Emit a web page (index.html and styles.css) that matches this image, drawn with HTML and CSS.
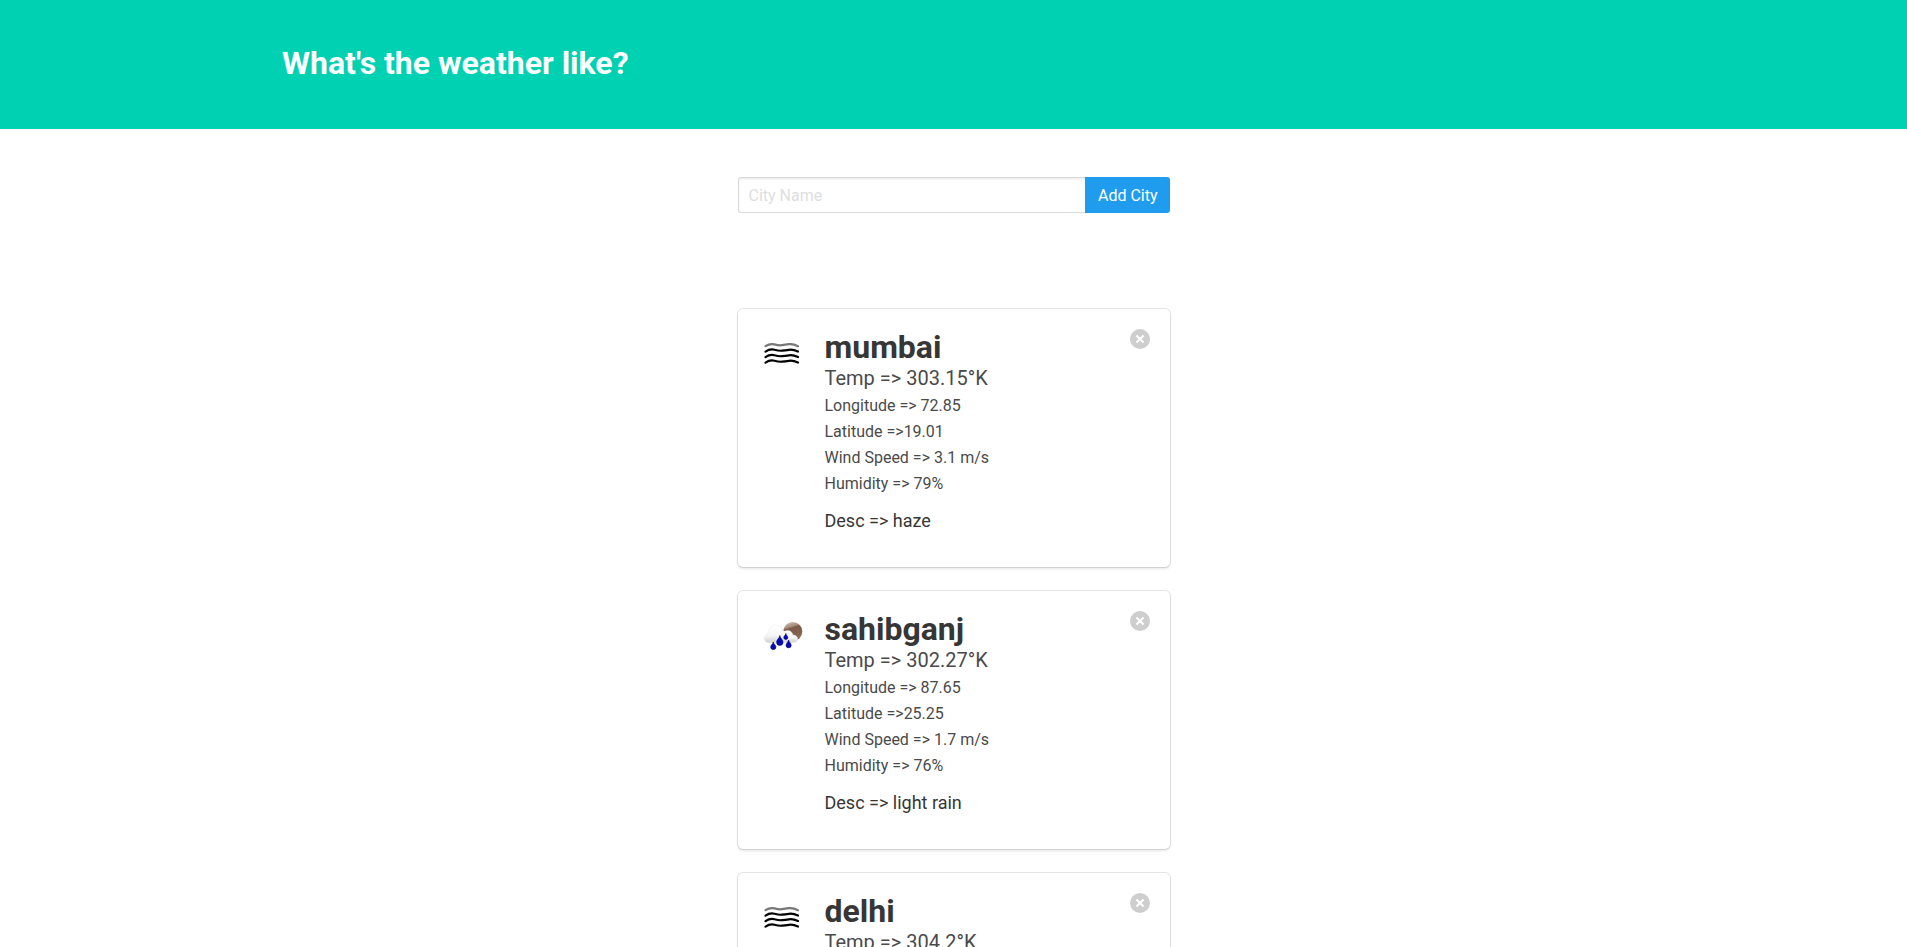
FILE: index.html
```
<!DOCTYPE html>
<html lang="en">
<head>
<meta charset="utf-8">
<meta name="viewport" content="width=device-width, initial-scale=1">
<title>What's the weather like?</title>
<link rel="stylesheet" href="styles.css">
</head>
<body>
<svg class="defs" width="0" height="0" aria-hidden="true">
  <defs>
    <linearGradient id="sun" x1="0" y1="0" x2=".3" y2="1">
      <stop offset="0" stop-color="#d8c8bc"/><stop offset=".32" stop-color="#a98f7e"/><stop offset=".42" stop-color="#7a5b47"/><stop offset="1" stop-color="#8a6a55"/>
    </linearGradient>
    <linearGradient id="cloud" x1="0" y1="0" x2="0" y2="1">
      <stop offset="0" stop-color="#ffffff"/><stop offset=".6" stop-color="#f6f6f6"/><stop offset="1" stop-color="#cfcfcf"/>
    </linearGradient>
    <symbol id="haze" viewBox="0 0 50 50">
      <g fill="none" stroke="#000" stroke-width="2.2" stroke-linecap="round">
        <path stroke="#777" d="M7.500 17.200Q12 14.200 16.500 15.400T24 16.200T31 15.200T40 17.200"/>
        <path d="M7.500 22.600Q12 19.600 16.500 20.800T24 21.700T31 20.800T40 22.600"/>
        <path d="M7.500 28.100Q12 25.100 16.500 26.300T24 27.200T31 26.300T40 28.100"/>
        <path d="M7.500 33.600Q12 30.600 16.500 31.800T24 32.700T31 31.800T40 33.600"/>
      </g>
    </symbol>
    <symbol id="rain" viewBox="0 0 50 50">
      <circle cx="34.800" cy="20.500" r="9.500" fill="url(#sun)"/>
      <path fill="url(#cloud)" stroke="#e2e2e2" stroke-width=".4" d="M24 31.500V24c1-3 3-4.500 5.500-4.500 3 0 5 2 5.500 4.500 3 0 4.700 1.700 4.700 4s-1.700 3.500-4 3.500z"/>
      <path fill="url(#cloud)" stroke="#e2e2e2" stroke-width=".4" d="M11 31.700c-3 0-4.800-2-4.800-4.600 0-2.300 1.600-4.300 4-4.700.2-4.700 3.300-8.400 7.500-8.400 3.600 0 6.200 2.200 7 5.600 2.800.5 4.800 2.900 4.800 6 0 3.600-2 6.100-5 6.100z"/>
      <g fill="#0509b8" stroke="#02046a" stroke-width=".6">
        <path d="M21.800 24.500c.5 3 3.200 4.200 3.200 6.700a3.200 3.200 0 0 1-6.400 0c0-2.500 2.700-3.700 3.200-6.700z"/>
        <path d="M27.800 22.500c.4 1.900 2 2.600 2 4a2 2 0 0 1-4 0c0-1.400 1.600-2.100 2-4z"/>
        <path d="M15.300 31c.4 2.300 2.600 3 2.600 4.900a2.600 2.600 0 0 1-5.200 0c0-1.900 2.200-2.600 2.600-4.900z"/>
        <path d="M30.600 29c.4 2.300 2.600 3.300 2.600 5.200a2.600 2.600 0 0 1-5.200 0c0-1.900 2.200-2.900 2.600-5.200z"/>
      </g>
    </symbol>
  </defs>
</svg>

<header class="hero">
  <div class="container">
    <h1 class="hero-title">What's the weather like?</h1>
  </div>
</header>

<section class="section">
  <div class="container">
    <form class="column city-form">
      <input class="input" type="text" name="name" aria-label="City Name" placeholder="City Name">
      <button class="button" type="button">Add City</button>
    </form>
  </div>
</section>

<main class="section">
  <div class="container">
    <div class="column">
      <article class="box">
        <svg class="icon" role="img" aria-label="Haze"><use href="#haze"/></svg>
        <div class="content">
          <h2 class="city">mumbai</h2>
          <p class="temp">Temp =&gt; 303.15°K</p>
          <p>Longitude =&gt; 72.85</p>
          <p>Latitude =&gt;19.01</p>
          <p>Wind Speed =&gt; 3.1 m/s</p>
          <p>Humidity =&gt; 79%</p>
          <p class="desc">Desc =&gt; haze</p>
        </div>
        <button class="delete" type="button" aria-label="Delete mumbai"></button>
      </article>
      <article class="box">
        <svg class="icon" role="img" aria-label="Light rain"><use href="#rain"/></svg>
        <div class="content">
          <h2 class="city">sahibganj</h2>
          <p class="temp">Temp =&gt; 302.27°K</p>
          <p>Longitude =&gt; 87.65</p>
          <p>Latitude =&gt;25.25</p>
          <p>Wind Speed =&gt; 1.7 m/s</p>
          <p>Humidity =&gt; 76%</p>
          <p class="desc">Desc =&gt; light rain</p>
        </div>
        <button class="delete" type="button" aria-label="Delete sahibganj"></button>
      </article>
      <article class="box">
        <svg class="icon" role="img" aria-label="Haze"><use href="#haze"/></svg>
        <div class="content">
          <h2 class="city">delhi</h2>
          <p class="temp">Temp =&gt; 304.2°K</p>
        </div>
        <button class="delete" type="button" aria-label="Delete delhi"></button>
      </article>
    </div>
  </div>
</main>
</body>
</html>
```
FILE: styles.css
```
* { box-sizing: border-box; margin: 0; padding: 0; }

html {
  overflow-x: hidden;
  scrollbar-width: none;
  background: #fff;
}

body {
  font-family: Roboto, "Open Sans", sans-serif;
  font-size: 16px;
  line-height: 26px;
  color: #4a4a4a;
}

.defs { position: absolute; }

.container {
  max-width: 1343px;
  margin: 0 auto;
}

.hero {
  padding: 45px 24px 48px;
  background: #00d1b2;
}

.hero-title {
  font-size: 32px;
  line-height: 36px;
  font-weight: 700;
  color: #fff;
}

.section { padding: 48px 24px; }

.column {
  max-width: 432px;
  margin: 0 auto;
}

.city-form { display: flex; }

.input {
  flex: 1;
  min-width: 0;
  height: 36px;
  padding: 0 10px;
  border: 1px solid #dbdbdb;
  border-right: 0;
  border-radius: 3px 0 0 3px;
  box-shadow: inset 0 1px 2px rgba(10, 10, 10, 0.1);
  font: inherit;
  color: #363636;
}

.input::placeholder { color: #dedede; }

.button {
  height: 36px;
  padding: 2px 12px 0 13px;
  border: 0;
  border-radius: 0 3px 3px 0;
  background: #209cee;
  color: #fff;
  font: inherit;
  cursor: pointer;
}

.box {
  display: flex;
  align-items: flex-start;
  min-height: 258px;
  padding: 20px;
  border-radius: 5px;
  background: #fff;
  box-shadow: 0 2px 3px rgba(10, 10, 10, 0.1), 0 0 0 1px rgba(10, 10, 10, 0.1);
}

.box + .box { margin-top: 24px; }

.icon {
  flex: none;
  width: 50px;
  height: 50px;
  margin-right: 17px;
}

.content { flex: 1; }

.city {
  font-size: 32px;
  line-height: 36px;
  font-weight: 700;
  color: #363636;
}

.temp {
  margin-bottom: 2px;
  font-size: 20px;
}

.desc {
  margin-top: 11px;
  font-size: 18px;
  color: #363636;
}

.delete {
  position: relative;
  flex: none;
  width: 20px;
  height: 20px;
  border: 0;
  border-radius: 50%;
  background: rgba(10, 10, 10, 0.2);
  cursor: pointer;
}

.delete::before,
.delete::after {
  content: "";
  position: absolute;
  inset: 9px 5px;
  background: #fff;
  transform: rotate(45deg);
}

.delete::after { transform: rotate(-45deg); }
```
